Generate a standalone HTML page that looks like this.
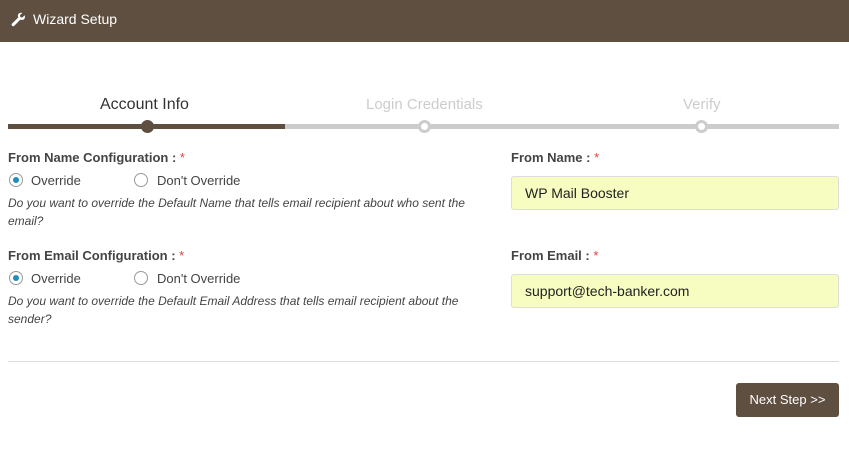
<!DOCTYPE html>
<html><head><style>
body{margin:0;width:849px;height:452px;background:#fff;font-family:"Liberation Sans",sans-serif;position:relative;overflow:hidden;color:#333}
.hd{position:absolute;left:0;top:0;width:849px;height:42px;background:#5e4f40}
.hd span{position:absolute;left:33px;top:11px;color:#fff;font-size:14px}
.a{position:absolute;white-space:nowrap}
.bar{position:absolute;top:124px;height:5px}
.dot{position:absolute;top:120px;width:13px;height:13px;border-radius:50%;box-sizing:border-box}
.lbl{font-size:13px;color:#333;font-weight:bold;color:#444}
.st{color:#e04040;font-weight:normal}
.rad{position:absolute;width:14px;height:14px;border:1px solid #999;border-radius:50%;box-sizing:border-box;background:#fff}
.rad.on::after{content:"";position:absolute;left:3px;top:3px;width:6px;height:6px;border-radius:50%;background:#1e8cbe}
.rt{font-size:13px;color:#444}
.hint{font-size:12px;font-style:italic;color:#444;line-height:18px;width:470px;white-space:normal}
.inp{position:absolute;left:511px;width:328px;height:34px;box-sizing:border-box;background:#f7fcc0;border:1px solid #ddd;border-radius:3px;font-size:14px;color:#222;padding:8px 0 0 13px}
</style></head><body>
<div class="hd">
<svg style="position:absolute;left:11px;top:12px" width="15" height="15" viewBox="0 0 16 16"><path d="M14.5 3.5l-2.5 2.5-2-0.5-0.5-2 2.5-2.5C10.3 0.5 8.3 1.2 7.6 2.8 7.2 3.8 7.3 4.9 7.7 5.8L1.2 12.3a1.6 1.6 0 0 0 2.3 2.3L10 8.1c1 .4 2.1.5 3.1.1 1.6-.7 2.3-2.7 1.4-4.7z" fill="#fff"/></svg>
<span>Wizard Setup</span></div>
<div class="a" style="left:100px;top:96px;font-size:16px;color:#333">Account Info</div>
<div class="a" style="left:366px;top:96px;font-size:15px;color:#ccc">Login Credentials</div>
<div class="a" style="left:683px;top:96px;font-size:15px;color:#ccc">Verify</div>
<div class="bar" style="left:8px;width:277px;background:#5e4f40"></div>
<div class="bar" style="left:285px;width:554px;background:#ccc"></div>
<div class="dot" style="left:141px;background:#5e4f40"></div>
<div class="dot" style="left:418px;background:#fff;border:3px solid #ccc"></div>
<div class="dot" style="left:695px;background:#fff;border:3px solid #ccc"></div>

<div class="a lbl" style="left:8px;top:150px">From Name Configuration : <span class="st">*</span></div>
<div class="rad on" style="left:9px;top:173px"></div><div class="a rt" style="left:31px;top:173px">Override</div>
<div class="rad" style="left:134px;top:173px"></div><div class="a rt" style="left:157px;top:173px">Don't Override</div>
<div class="a hint" style="left:8px;top:194px">Do you want to override the Default Name that tells email recipient about who sent the email?</div>

<div class="a lbl" style="left:8px;top:248px">From Email Configuration : <span class="st">*</span></div>
<div class="rad on" style="left:9px;top:271px"></div><div class="a rt" style="left:31px;top:271px">Override</div>
<div class="rad" style="left:134px;top:271px"></div><div class="a rt" style="left:157px;top:271px">Don't Override</div>
<div class="a hint" style="left:8px;top:292px">Do you want to override the Default Email Address that tells email recipient about the sender?</div>

<div class="a lbl" style="left:511px;top:150px">From Name : <span class="st">*</span></div>
<div class="inp" style="top:176px">WP Mail Booster</div>
<div class="a lbl" style="left:511px;top:248px">From Email : <span class="st">*</span></div>
<div class="inp" style="top:274px">support@tech-banker.com</div>

<div class="a" style="left:8px;top:361px;width:831px;height:1px;background:#ddd"></div>
<div class="a" style="left:736px;top:383px;width:103px;height:34px;background:#5e4f40;border-radius:3px;color:#fff;font-size:13px;text-align:center;line-height:34px">Next Step &gt;&gt;</div>
</body></html>
